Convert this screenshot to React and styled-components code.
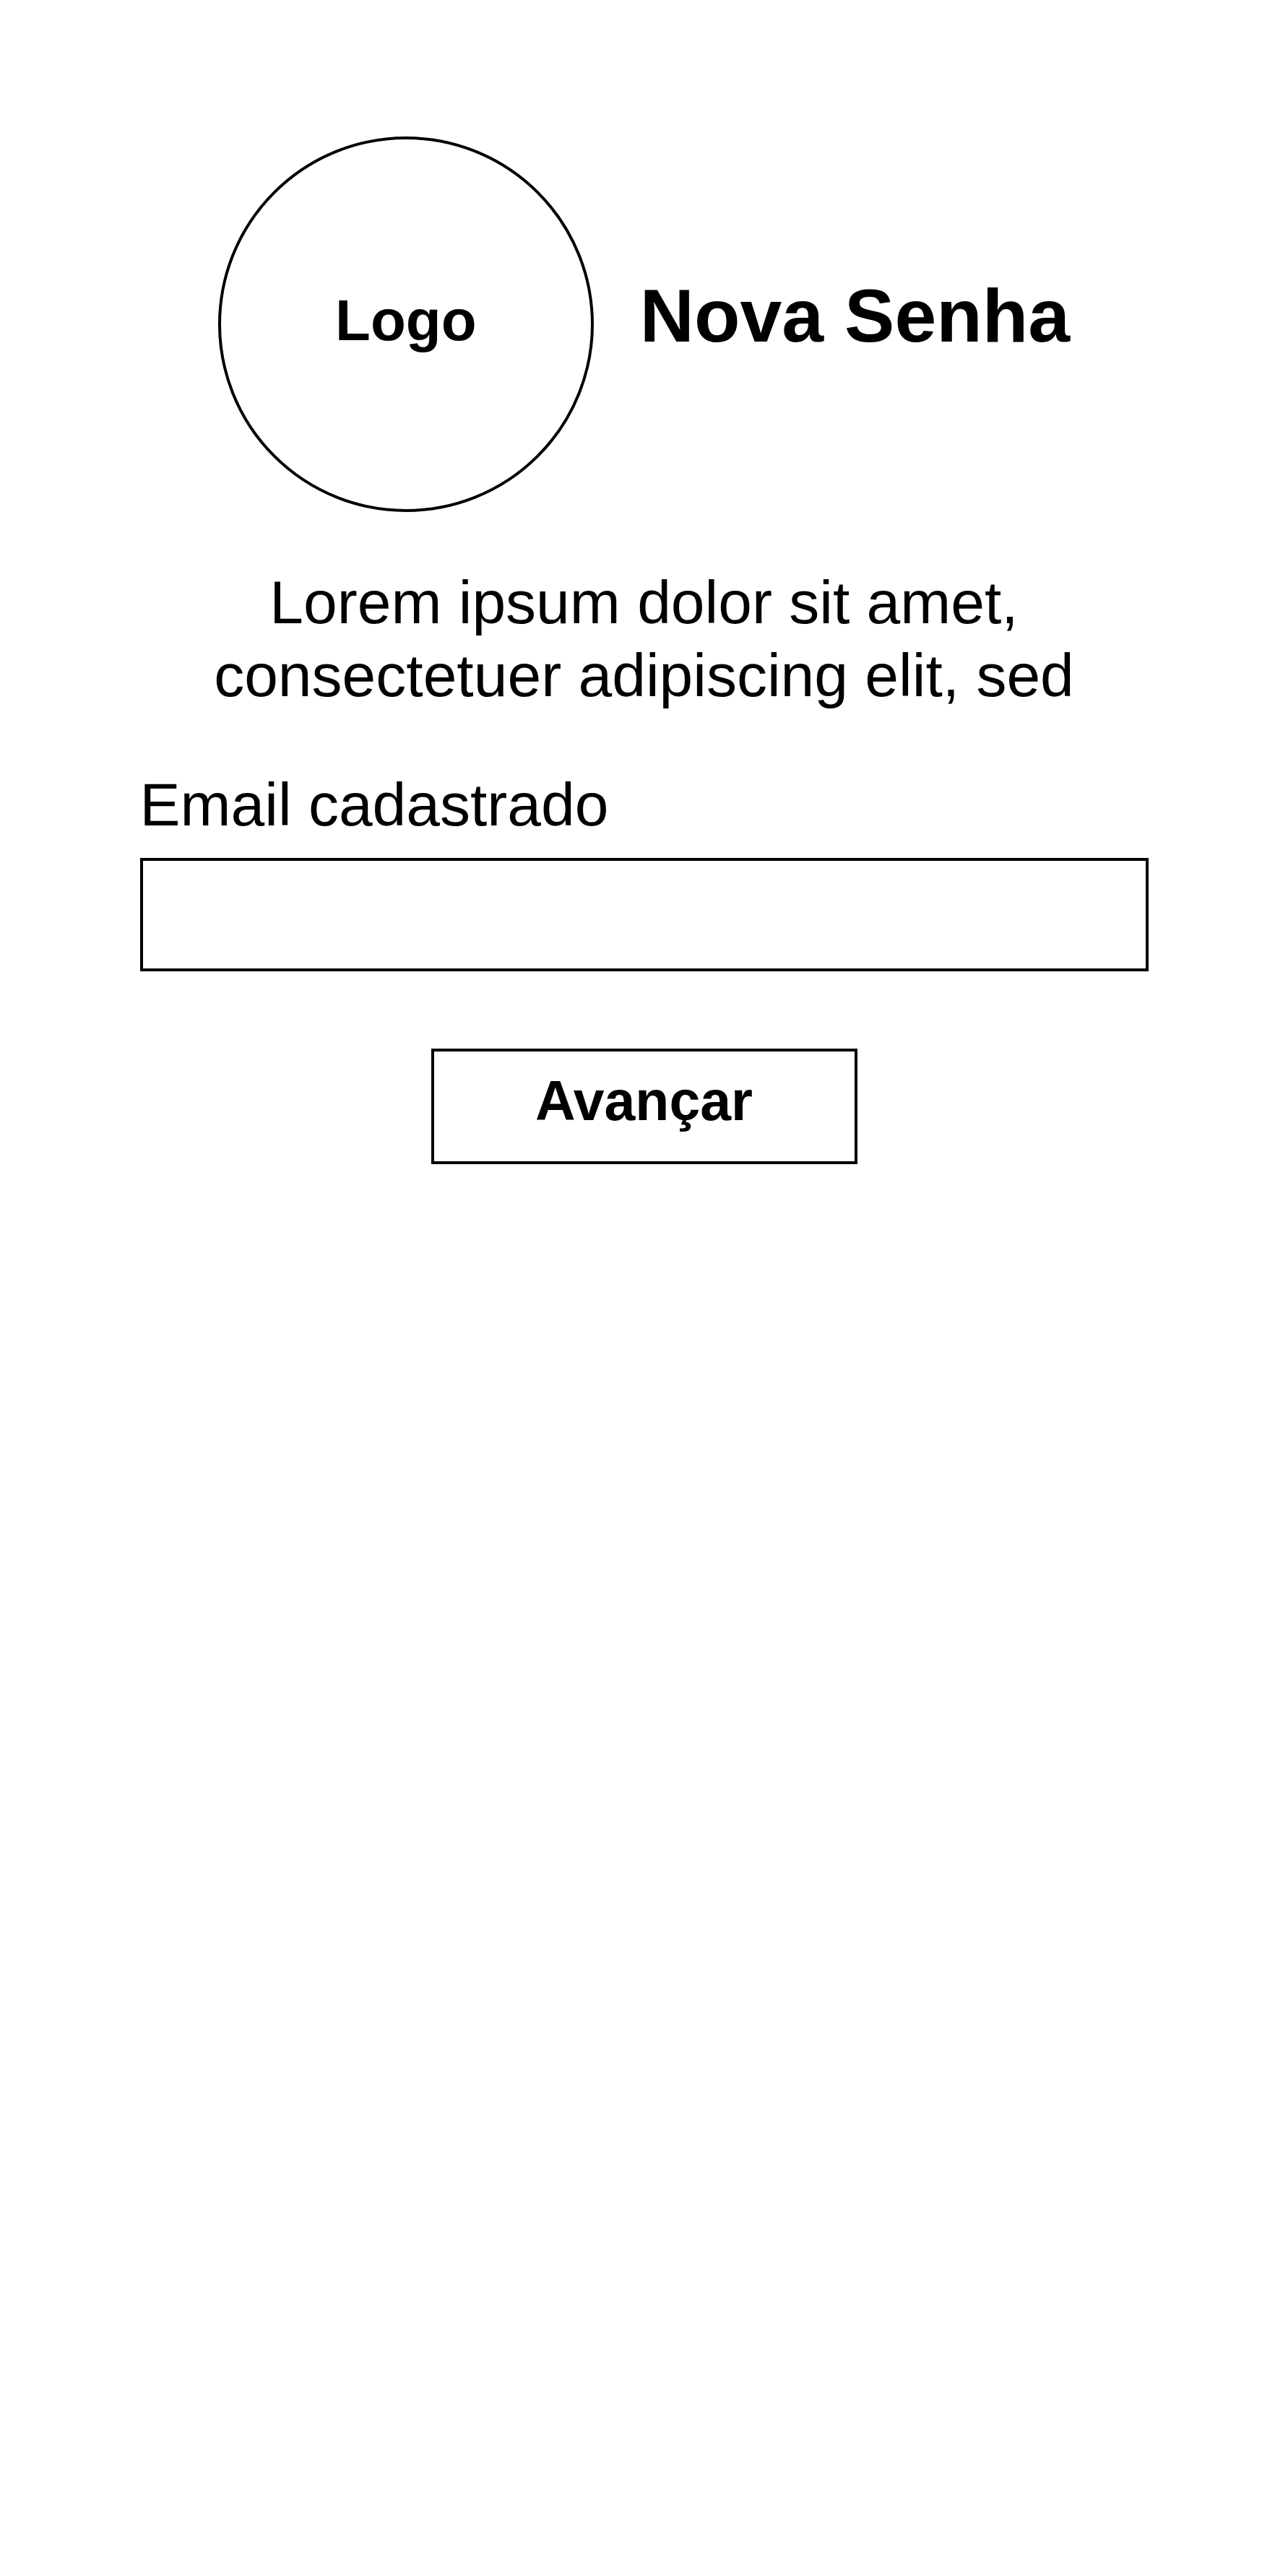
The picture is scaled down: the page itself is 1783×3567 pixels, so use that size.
import React from "react";
import styled, { createGlobalStyle } from "styled-components";

const GlobalStyle = createGlobalStyle`
  body {
    margin: 0;
    background: #fff;
    color: #000;
    font-family: "Liberation Sans", Arial, sans-serif;
  }
`;

const Page = styled.main`
  display: flex;
  flex-direction: column;
  align-items: center;
  padding-top: 189px;
`;

const Header = styled.header`
  display: flex;
  align-items: center;
  gap: 64px;
`;

const LogoCircle = styled.div`
  box-sizing: border-box;
  width: 520px;
  height: 520px;
  border: 4px solid #000;
  border-radius: 50%;
  display: flex;
  align-items: center;
  justify-content: center;
  padding-bottom: 10px;
  font-size: 80px;
  font-weight: 700;
`;

const Title = styled.h1`
  margin: 0 0 24px;
  font-size: 104px;
  font-weight: 700;
  line-height: normal;
`;

const Description = styled.p`
  width: 1396px;
  margin: 75px 0 0;
  font-size: 84px;
  line-height: 1.2;
  text-align: center;
`;

const Form = styled.form`
  width: 1396px;
  display: flex;
  flex-direction: column;
  margin-top: 78px;
`;

const Label = styled.label`
  font-size: 84px;
  line-height: 1.2;
  margin-bottom: 24px;
`;

const Input = styled.input`
  box-sizing: border-box;
  width: 100%;
  height: 157px;
  border: 4px solid #000;
  background: #fff;
  outline: none;
  padding: 0 24px;
  font-family: inherit;
  font-size: 60px;
`;

const Button = styled.button`
  box-sizing: border-box;
  align-self: center;
  width: 590px;
  height: 160px;
  margin-top: 107px;
  border: 4px solid #000;
  background: #fff;
  color: #000;
  padding: 0 0 16px;
  font-family: inherit;
  font-size: 77px;
  font-weight: 700;
  cursor: pointer;
`;

export default function App() {
  return (
    <>
      <GlobalStyle />
      <Page>
        <Header>
          <LogoCircle>Logo</LogoCircle>
          <Title>Nova Senha</Title>
        </Header>
        <Description>
          Lorem ipsum dolor sit amet, consectetuer adipiscing elit, sed
        </Description>
        <Form onSubmit={(e) => e.preventDefault()}>
          <Label htmlFor="email">Email cadastrado</Label>
          <Input id="email" type="email" />
          <Button type="submit">Avançar</Button>
        </Form>
      </Page>
    </>
  );
}
